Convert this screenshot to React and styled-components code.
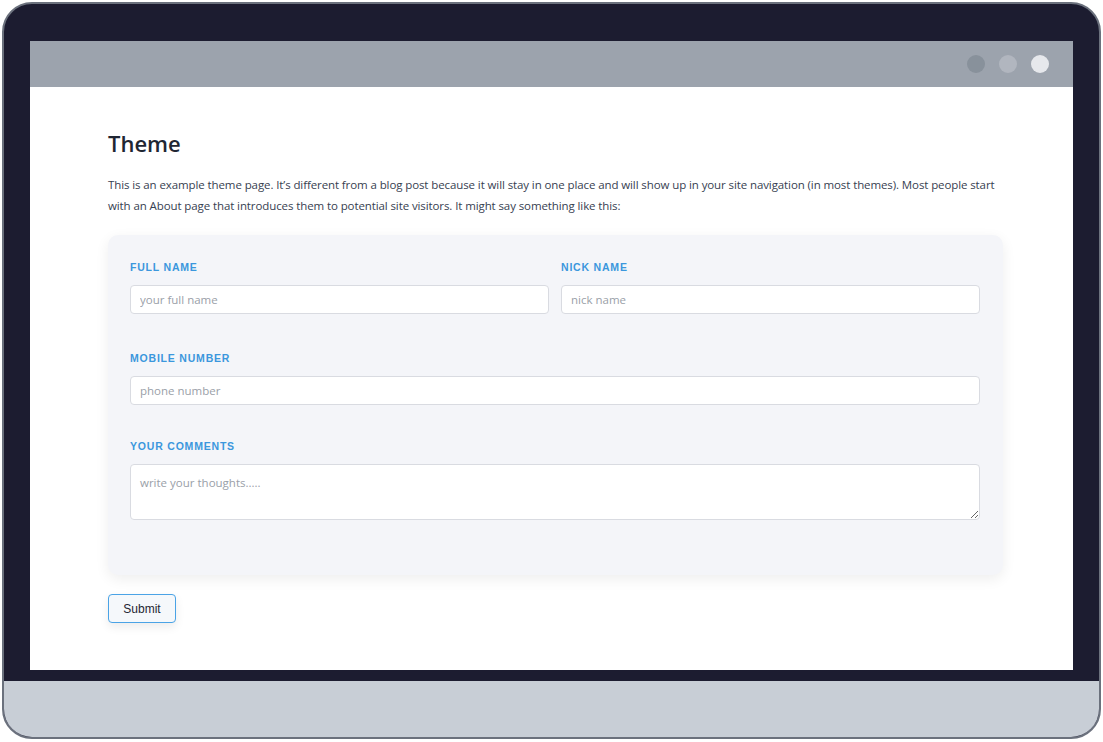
import React from "react";
import styled, { createGlobalStyle } from "styled-components";

const Global = createGlobalStyle`
  html, body { margin: 0; padding: 0; background: #ffffff; }
  body { font-family: "Open Sans", "Noto Sans", sans-serif; }
  * { box-sizing: border-box; }
`;

const Device = styled.div`
  margin: 2px 0 0 2px;
  width: 1099px;
  height: 737px;
  border: 2px solid #6b717d;
  border-radius: 30px;
  overflow: hidden;
  background: #1c1c30;
  display: flex;
  flex-direction: column;
`;

const Bezel = styled.div`
  padding: 37px 26px 11px 26px;
  flex: 1;
  display: flex;
`;

const Screen = styled.div`
  flex: 1;
  background: #ffffff;
  display: flex;
  flex-direction: column;
`;

const TopBar = styled.div`
  height: 46px;
  background: #9ca3ad;
  display: flex;
  align-items: center;
  justify-content: flex-end;
  gap: 14px;
  padding-right: 24px;
`;

const Dot = styled.span`
  width: 18px;
  height: 18px;
  border-radius: 50%;
  background: ${(p) => p.$color};
`;

const Base = styled.div`
  height: 56px;
  background: #c8ced6;
`;

const Content = styled.main`
  padding: 41px 70px 0 78px;
`;

const Title = styled.h1`
  margin: 0 0 16px;
  font-size: 22px;
  font-weight: 600;
  color: #1f2633;
  line-height: 30px;
`;

const Intro = styled.p`
  margin: 0 0 19px;
  font-size: 11.5px;
  letter-spacing: -0.1px;
  line-height: 21px;
  color: #374151;
`;

const Card = styled.form`
  background: #f4f5f9;
  border-radius: 10px;
  box-shadow: 0 4px 14px rgba(0, 0, 0, 0.07);
  padding: 27px 23px 55px 22px;
  display: flex;
  flex-direction: column;
`;

const Row = styled.div`
  display: grid;
  grid-template-columns: ${(p) => (p.$cols === 2 ? "1fr 1fr" : "1fr")};
  gap: 12px;
  margin-top: ${(p) => p.$top || 0}px;
`;

const Field = styled.div`
  display: flex;
  flex-direction: column;
  gap: 13px;
`;

const Label = styled.label`
  font-family: "Liberation Sans", Arial, sans-serif;
  font-size: 10.5px;
  font-weight: 700;
  letter-spacing: 0.8px;
  text-transform: uppercase;
  color: #3b97dd;
  line-height: 10px;
`;

const Input = styled.input`
  height: 29px;
  border: 1px solid #d9dbe1;
  border-radius: 4px;
  background: #ffffff;
  padding: 0 9px;
  font-family: inherit;
  font-size: 11.5px;
  color: #374151;
  outline: none;
  &::placeholder { color: #9aa0a8; }
`;

const TextArea = styled.textarea`
  height: 56px;
  border: 1px solid #d9dbe1;
  border-radius: 4px;
  background: #ffffff;
  padding: 10px 9px;
  font-family: inherit;
  font-size: 11.5px;
  color: #374151;
  resize: vertical;
  outline: none;
  &::placeholder { color: #9aa0a8; }
`;

const SubmitButton = styled.button`
  margin-top: 19px;
  width: 68px;
  height: 29px;
  border: 1px solid #4aa3e6;
  border-radius: 4px;
  background: #f5f8fb;
  box-shadow: 0 4px 10px rgba(0, 0, 0, 0.08);
  font-family: "Liberation Sans", Arial, sans-serif;
  font-size: 12px;
  color: #1f2633;
  cursor: pointer;
`;

export default function App() {
  return (
    <>
      <Global />
      <Device>
        <Bezel>
          <Screen>
            <TopBar>
              <Dot $color="#88919b" />
              <Dot $color="#b1b6bf" />
              <Dot $color="#e6e8ec" />
            </TopBar>
            <Content>
              <Title>Theme</Title>
              <Intro>
                This is an example theme page. It’s different from a blog post because it will stay in one place and
                will show up in your site navigation (in most themes). Most people start with an About page that
                introduces them to potential site visitors. It might say something like this:
              </Intro>
              <Card onSubmit={(e) => e.preventDefault()}>
                <Row $cols={2}>
                  <Field>
                    <Label>Full Name</Label>
                    <Input placeholder="your full name" />
                  </Field>
                  <Field>
                    <Label>Nick Name</Label>
                    <Input placeholder="nick name" />
                  </Field>
                </Row>
                <Row $top={39}>
                  <Field>
                    <Label>Mobile Number</Label>
                    <Input placeholder="phone number" />
                  </Field>
                </Row>
                <Row $top={36}>
                  <Field>
                    <Label>Your Comments</Label>
                    <TextArea placeholder="write your thoughts....." />
                  </Field>
                </Row>
              </Card>
              <SubmitButton type="button">Submit</SubmitButton>
            </Content>
          </Screen>
        </Bezel>
        <Base />
      </Device>
    </>
  );
}
